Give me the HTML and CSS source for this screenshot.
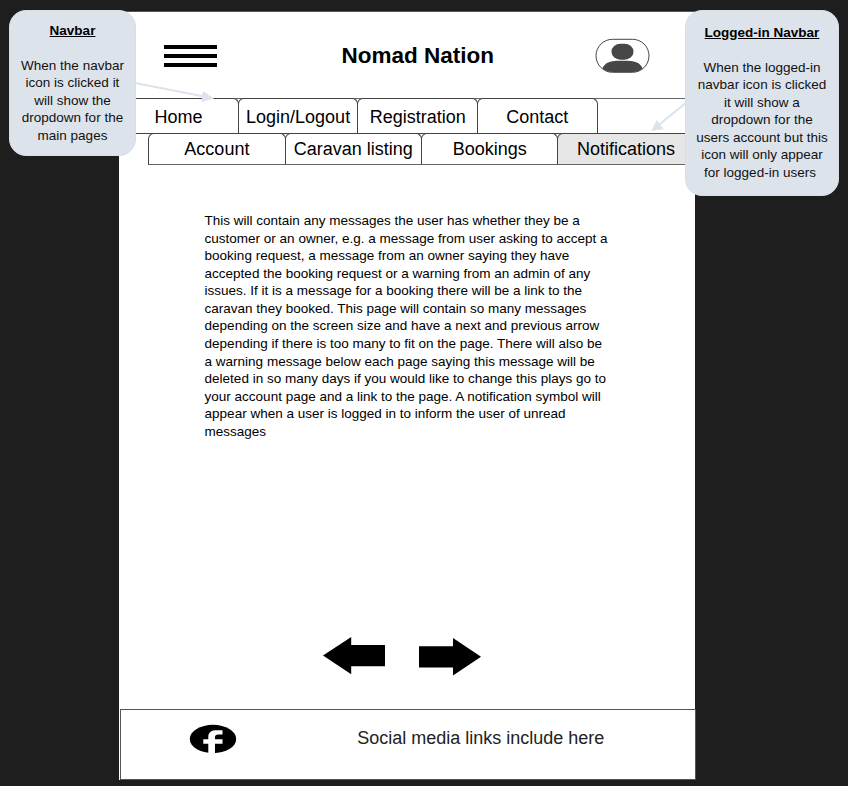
FILE: index.html
```html
<!DOCTYPE html>
<html lang="en">
<head>
<meta charset="utf-8">
<title>Nomad Nation</title>
<link rel="stylesheet" href="styles.css">
</head>
<body>
<div class="page">
  <header class="header">
    <div class="menu"><span></span><span></span><span></span></div>
    <h1>Nomad Nation</h1>
    <svg class="user" viewBox="0 0 56 36" width="56" height="36">
      <defs><clipPath id="pill"><rect x="2" y="1" width="53" height="33" rx="16.5"/></clipPath></defs>
      <g clip-path="url(#pill)" fill="#464646"><rect x="17.500" y="5.700" width="22" height="16" rx="9" ry="8"/><path d="M8 34C8 26 15 22.800 23 22.800H34C42 22.800 49 26 49 34V36H8Z"/></g>
      <rect x="2" y="1.300" width="53" height="33" rx="16.500" fill="none" stroke="#444"/>
    </svg>
  </header>
  <nav class="tabs main-tabs"><a>Home</a><a>Login/Logout</a><a>Registration</a><a>Contact</a></nav>
  <nav class="tabs user-tabs"><a>Account</a><a>Caravan listing</a><a>Bookings</a><a class="active">Notifications</a></nav>
  <main>
    <p>This will contain any messages the user has whether they be a<br>customer or an owner, e.g. a message from user asking to accept a<br>booking request, a message from an owner saying they have<br>accepted the booking request or a warning from an admin of any<br>issues. If it is a message for a booking there will be a link to the<br>caravan they booked. This page will contain so many messages<br>depending on the screen size and have a next and previous arrow<br>depending if there is too many to fit on the page. There will also be<br>a warning message below each page saying this message will be<br>deleted in so many days if you would like to change this plays go to<br>your account page and a link to the page. A notification symbol will<br>appear when a user is logged in to inform the user of unread<br>messages</p>
    <div class="pager">
      <svg width="64" height="40" viewBox="0 0 64 40"><path d="M1 19.500L29.200 1V9H63V30.200H29.200V38.200Z"/></svg>
      <svg width="64" height="40" viewBox="0 0 64 40"><path d="M63 20.800L35 2V10.200H1V31.500H35V39.500Z"/></svg>
    </div>
  </main>
  <footer>
    <svg class="facebook" width="48" height="30" viewBox="0 0 48 30"><ellipse cx="24" cy="15" rx="23.200" ry="14.200"/><path d="M19.300 30V19.700H14.300V15.300H19.300V13C19.300 8 22.500 6.200 28 6.200H33.500V10.500H29.500C27 10.500 26 11.500 26 13.200V15.300H33.500V19.700H26V30Z" fill="#fff"/></svg>
    <span>Social media links include here</span>
  </footer>
</div>
<svg class="pointers" width="848" height="200" viewBox="0 0 848 200">
  <g stroke="#dde3eb" stroke-width="2"><path d="M135 83L204 96.500M687 102L658 125.500"/></g>
  <path d="M203 91L214 98.500L201.500 102ZM651.500 131L656.500 120L663.500 129Z" fill="#dde3eb"/>
</svg>
<aside class="note note-left"><h2>Navbar</h2><p>When the navbar<br>icon is clicked it<br>will show the<br>dropdown for the<br>main pages</p></aside>
<aside class="note note-right"><h2>Logged-in Navbar</h2><p>When the logged-in<br>navbar icon is clicked<br>it will show a<br>dropdown for the<br>users account but this<br>icon will only appear<br><span class="last-line">for logged-in users</span></p></aside>
</body>
</html>
```
FILE: styles.css
```css
* { box-sizing: border-box; }
body {
  margin: 0;
  height: 786px;
  padding-top: 11px;
  overflow: hidden;
  background: #1e1e1e;
  color: #000;
  font-family: "Liberation Sans", Arial, sans-serif;
}
h1, h2, p { margin: 0; }
svg { display: block; flex: none; }
.page {
  display: flex;
  flex-direction: column;
  width: 576px;
  height: 769px;
  margin-left: 119px;
  border-top: 1px solid #555;
  background: #fff;
}
.header {
  display: flex;
  flex: none;
  height: 86px;
  padding-left: 45px;
}
.menu {
  display: flex;
  flex-direction: column;
  gap: 5.5px;
  width: 53px;
  padding-top: 33px;
}
.menu span { height: 3.5px; background: #000; }
h1 {
  width: 204px;
  margin-left: 98.7px;
  padding-top: 30px;
  font-size: 22.5px;
  line-height: 27px;
  text-align: center;
  white-space: nowrap;
}
.user { margin: 26px 0 0 74px; }
.tabs { display: flex; flex: none; font-size: 18px; white-space: nowrap; }
.tabs a {
  flex: none;
  border: 1px solid #444;
  border-bottom: 0;
  border-radius: 6px 6px 0 0;
  text-align: center;
}
.tabs a + a { margin-left: -1px; }
.main-tabs { height: 35px; border-top: 1px solid #666; }
.main-tabs a { width: 120.6px; height: 35px; margin-top: -1px; line-height: 36px; }
.main-tabs a:first-child { margin-left: -0.8px; }
.user-tabs {
  height: 32px;
  padding-left: 29.2px;
  border-top: 1px solid #444;
}
.user-tabs a {
  width: 137.4px;
  height: 32px;
  margin-top: -1px;
  border-bottom: 1px solid #666;
  line-height: 31px;
}
.user-tabs .active { background: #e6e6e6; }
main { flex: 1; padding: 47px 0 0 85.6px; }
main p {
  height: 424px;
  font-size: 13.5px;
  line-height: 17.58px;
  white-space: nowrap;
}
.pager { display: flex; gap: 32px; margin-left: 117.4px; }
footer {
  display: flex;
  flex: none;
  width: 576px;
  height: 71px;
  margin-left: 1px;
  border: 1px solid #555;
}
.facebook { margin: 14px 0 0 68px; }
footer span {
  margin: 15px 0 0 120.2px;
  color: #222;
  font-size: 18px;
  line-height: 27px;
  white-space: nowrap;
}
.pointers { position: absolute; left: 0; top: 0; }
.note {
  position: absolute;
  top: 10px;
  border: 1px solid #d8dee6;
  border-radius: 17px;
  background: #dde3eb;
  color: #111;
  font-size: 13.5px;
  line-height: 17.58px;
  text-align: center;
  white-space: nowrap;
}
.note h2 {
  margin-bottom: 17px;
  color: #000;
  font-size: 13.5px;
  text-decoration: underline;
}
.note-left { left: 9px; width: 127px; height: 146px; padding-top: 11px; }
.note-right { left: 685px; width: 154px; height: 186px; padding-top: 13px; }
.last-line { padding-right: 4px; }
```
